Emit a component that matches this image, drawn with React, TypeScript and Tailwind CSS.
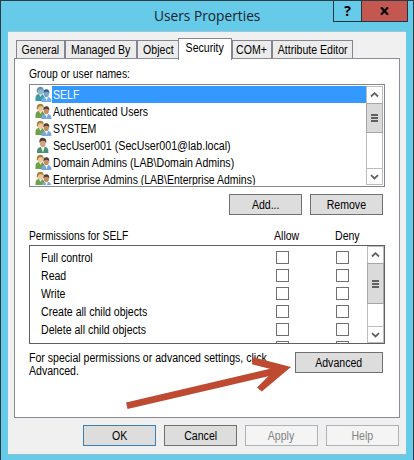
import { clsx } from 'clsx';

const tabs = [
  { label: 'General', className: 'w-[49px]' },
  { label: 'Managed By', className: 'w-[72px]' },
  { label: 'Object', className: 'w-[42px] -mr-px' },
  { label: 'Security', className: 'w-[54px]', active: true },
  { label: 'COM+', className: 'w-[40px]' },
  { label: 'Attribute Editor', className: 'w-[81px]' },
];

const principals = [
  { name: 'SELF', selected: true },
  { name: 'Authenticated Users' },
  { name: 'SYSTEM' },
  { name: 'SecUser001 (SecUser001@lab.local)', single: true, scale: 'scale-x-[.89]' },
  { name: 'Domain Admins (LAB\\Domain Admins)', scale: 'scale-x-[.882]' },
  { name: 'Enterprise Admins (LAB\\Enterprise Admins)', scale: 'scale-x-[.872]' },
];

const permissions = ['Full control', 'Read', 'Write', 'Create all child objects', 'Delete all child objects', ''];

// The dialog font is slightly condensed
function Label({ children, scale = 'scale-x-[.88]', center }: { children: string; scale?: string; center?: boolean }) {
  return (
    <span className={clsx('inline-block whitespace-nowrap', center ? 'origin-center' : 'origin-left', scale)}>{children}</span>
  );
}

function UsersIcon({ selected }: { selected?: boolean }) {
  return (
    <svg width="17" height="17" viewBox="0 0 17 17" className="shrink-0">
      <path d="M0.5 15 V11 Q1 8.3 4 7.8 H7 L9 10 V15 Z" fill={selected ? '#3f9aa5' : '#6fa04b'} />
      <path d="M4 8 L5.5 11 L7 8 Z" fill="#e9f3e4" />
      <ellipse cx="5.3" cy="5" rx="2.9" ry="3.6" fill={selected ? '#8fb5cc' : '#edc79b'} />
      <path d="M1.8 6 Q1.2 1 5.3 0.8 Q9.2 1 8.6 5.2 Q7.8 2.8 5.5 3.2 Q3 3 2.9 6.5 Z" fill={selected ? '#5f94a5' : '#a98137'} />
      <path d="M6.5 16 V13.5 Q7 11.2 10 10.8 H13 Q16 11.5 16.3 14 V16 Z" fill={selected ? '#6cb1ea' : '#76a9da'} />
      <path d="M10 11 L11.6 15 L13 11 Z" fill="#f1f6fb" />
      <ellipse cx="11.3" cy="7.7" rx="2.6" ry="3.4" fill={selected ? '#7ea6c4' : '#c58e64'} />
      <path d="M8.4 7.5 Q8 3.3 11.4 3.2 Q14.8 3.4 14.2 7.8 Q13.4 5.3 11.2 5.8 Q9.3 5.6 8.4 7.5 Z" fill={selected ? '#2d5f8c' : '#4d3d30'} />
    </svg>
  );
}

function UserIcon() {
  return (
    <svg width="17" height="17" viewBox="0 0 17 17" className="shrink-0">
      <path d="M2 16 V13.5 Q2.5 10.3 6.5 9.8 H9.5 Q13 10.5 13.3 13.5 V16 Z" fill="#489173" />
      <path d="M5.8 10 L8 15.5 L9.7 10 Z" fill="#eef5f2" />
      <ellipse cx="7.8" cy="6" rx="2.9" ry="4.1" fill="#d5a27b" />
      <path d="M4.5 6 Q3.7 0.8 7.8 0.7 Q12 1 11.2 6 Q10 3.5 7.8 3.8 Q5.4 3.6 4.5 6 Z" fill="#4b4039" />
    </svg>
  );
}

function Chevron({ up }: { up?: boolean }) {
  return (
    <svg width="9" height="6" viewBox="0 0 9 6">
      <path d={up ? 'M1 4.5 L4.5 1.2 L8 4.5' : 'M1 1.2 L4.5 4.5 L8 1.2'} fill="none" stroke="#606060" strokeWidth="1.8" />
    </svg>
  );
}

function ScrollBar({ thumb }: { thumb: string }) {
  return (
    <div className="flex w-[17px] shrink-0 flex-col border border-[#bcbcbc] bg-white">
      <div className="flex h-4 shrink-0 items-center justify-center">
        <Chevron up />
      </div>
      <div className={clsx('-mx-px flex shrink-0 flex-col items-center justify-center gap-px border border-[#a6a6a6] bg-[#dadada]', thumb)}>
        <div className="h-0.5 w-[7px] bg-[#606060]" />
        <div className="h-0.5 w-[7px] bg-[#606060]" />
        <div className="h-0.5 w-[7px] bg-[#606060]" />
      </div>
      <div className="mt-auto flex h-4 shrink-0 items-center justify-center border-t border-[#bcbcbc]">
        <Chevron />
      </div>
    </div>
  );
}

type ButtonProps = { label: string; className?: string; variant?: 'normal' | 'default' | 'disabled' };

function Button({ label, className = 'w-[73px]', variant = 'normal' }: ButtonProps) {
  return (
    <button
      disabled={variant === 'disabled'}
      className={clsx(
        'flex h-[21px] shrink-0 items-center justify-center border pt-0.5',
        variant === 'normal' && 'border-[#707070] bg-[#dddddd]',
        variant === 'default' && 'border-[#3c7fb1] bg-[#dddddd]',
        variant === 'disabled' && 'border-[#adb2b5] bg-[#f4f4f4] text-[#838383]',
        className
      )}
    >
      <Label center>{label}</Label>
    </button>
  );
}

export default function App() {
  return (
    <div className="relative flex h-[460px] w-[414px] flex-col overflow-hidden border-x border-t border-[#2d3b43] bg-[#66cae9] font-['Liberation_Sans',Arial,sans-serif] text-[12px] leading-[13px] text-black">
      {/* Title bar */}
      <div className="flex h-[30px] shrink-0">
        <h1 className="flex-1 pt-1 pl-[153px] font-['Open_Sans','Noto_Sans',sans-serif] text-[15px] leading-5 text-[#16242b]">
          <Label scale="scale-x-[.915]">Users Properties</Label>
        </h1>
        <div className="mr-[5px] flex h-[21px] border-x border-b border-[#24343c]">
          <button className="w-[27px] font-['Open_Sans',sans-serif] text-[14px] leading-5 font-bold">?</button>
          <button className="flex w-[46px] items-center justify-center border-l border-[#24343c] bg-[#c4574f]">
            <svg width="9" height="8" viewBox="0 0 9 8">
              <path d="M1 0.3 L8 7.7 M8 0.3 L1 7.7" stroke="#000" strokeWidth="2.2" />
            </svg>
          </button>
        </div>
      </div>

      <div className="mx-[7px] flex h-[424px] flex-col border-y border-t-[#9cc7d6] border-b-[#8fc0d2] bg-[#f0f0f0] px-1.5 pt-1.5">
        {/* Tabs */}
        <div className="flex items-end pl-0.5">
          {tabs.map((tab) => (
            <div
              key={tab.label}
              className={clsx(
                'flex justify-center border-x border-t border-[#85858f] pt-[3px]',
                tab.active ? 'relative z-10 -mb-0.5 h-[22px] bg-white' : 'h-[18px] bg-[#ececec]',
                tab.className
              )}
            >
              <Label center>{tab.label}</Label>
            </div>
          ))}
        </div>

        {/* Security page */}
        <div className="flex h-[360px] flex-col border border-[#898c95] bg-white px-[14px]">
          <div className="mt-[9px] h-4">
            <Label scale="scale-x-[.865]">Group or user names:</Label>
          </div>

          <div className="flex h-[103px] w-[356px] border border-[#828790] p-px">
            <div className="flex-1 overflow-hidden">
              {principals.map((p) => (
                <div key={p.name} className="flex h-[17px] pl-1">
                  {p.single ? <UserIcon /> : <UsersIcon selected={p.selected} />}
                  <div className={clsx('flex-1 pt-[3px] pl-px', p.selected && 'bg-[#3399ff] text-white')}>
                    <Label scale={p.scale}>{p.name}</Label>
                  </div>
                </div>
              ))}
            </div>
            <ScrollBar thumb="h-[30px]" />
          </div>

          <div className="mt-[7px] flex justify-end gap-2 pr-[2px]">
            <Button label="Add..." />
            <Button label="Remove" />
          </div>

          <div className="mt-[15px] flex h-[15px]">
            <div className="w-[245px]">
              <Label scale="scale-x-[.855]">Permissions for SELF</Label>
            </div>
            <div className="w-[61px]">
              <Label>Allow</Label>
            </div>
            <Label>Deny</Label>
          </div>

          <div className="flex h-[99px] w-[356px] border border-[#606060]">
            <div className="flex-1 overflow-hidden pt-[5px] pl-[11px]">
              {permissions.map((name) => (
                <div key={name} className="flex h-[18px]">
                  <div className="w-[235px] pt-px">
                    <Label>{name}</Label>
                  </div>
                  <span className="mr-[47px] size-[13px] border border-[#707070]" />
                  <span className="size-[13px] border border-[#707070]" />
                </div>
              ))}
            </div>
            <ScrollBar thumb="h-[41px]" />
          </div>

          <div className="mt-2 flex justify-between pr-[2px]">
            <p className="flex w-[250px] flex-col items-start">
              <Label>For special permissions or advanced settings, click</Label>
              <Label>Advanced.</Label>
            </p>
            <Button label="Advanced" className="w-[88px]" />
          </div>
        </div>

        {/* Dialog buttons */}
        <div className="mt-[7px] flex justify-end gap-2 pr-px">
          <Button label="OK" variant="default" />
          <Button label="Cancel" />
          <Button label="Apply" variant="disabled" />
          <Button label="Help" variant="disabled" />
        </div>
      </div>

      {/* Arrow pointing at the Advanced button */}
      <svg className="absolute top-[349px] left-[119px] z-20" width="180" height="70" viewBox="120 350 180 70">
        <path d="M126.8 405.7 L274 371.4" stroke="#bf4a32" strokeWidth="6.8" />
        <path d="M253.4 357.2 L291 367 L261.8 391.6 L257 387.4 L268.3 376.2 L270.5 369 L251.8 364.2 Z" fill="#bf4a32" />
      </svg>
    </div>
  );
}
